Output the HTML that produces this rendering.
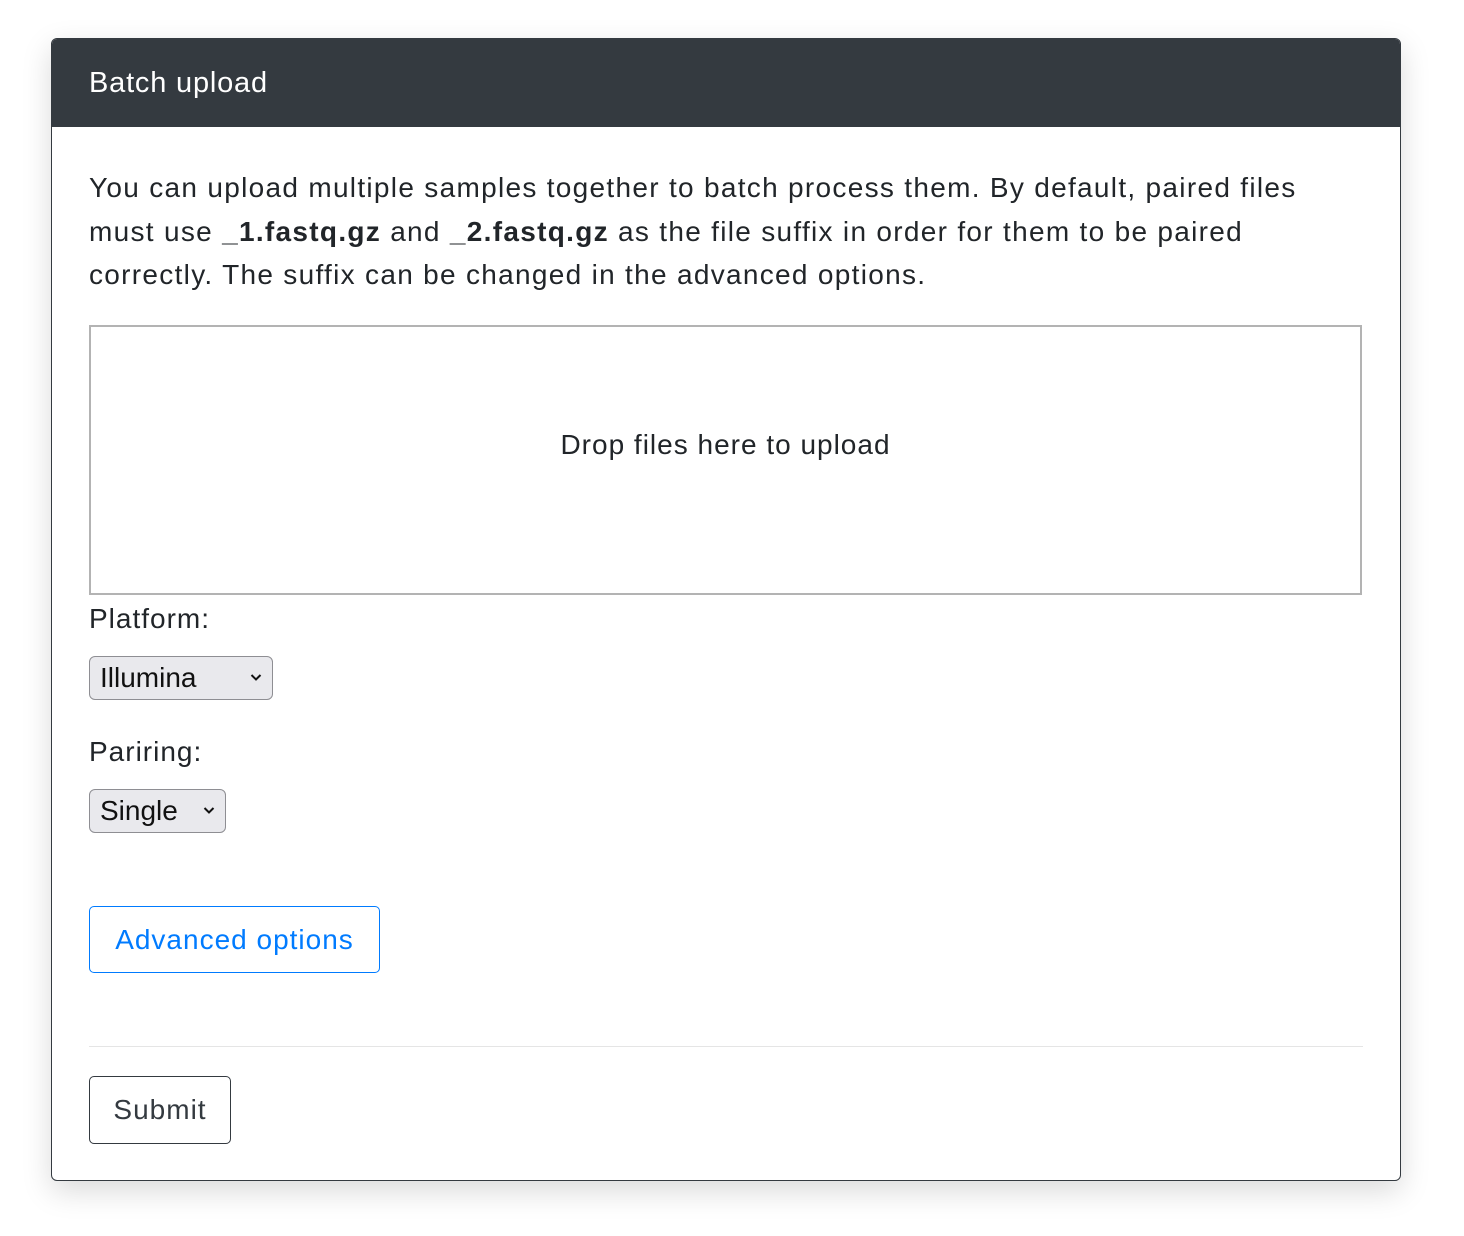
<!DOCTYPE html>
<html><head><style>
body{margin:0;background:#fff;font-family:"Liberation Sans",sans-serif;color:#212529;width:1464px;height:1236px;position:relative;overflow:hidden}
.card{position:absolute;left:51px;top:38px;width:1348px;height:1141px;border:1px solid #343a40;border-radius:6px;box-shadow:0 10px 30px rgba(0,0,0,.15);background:#fff;overflow:hidden}
.hdr{position:absolute;left:0;top:0;right:0;height:88px;background:#343a40;color:#fff;font-size:29px;letter-spacing:.8px;line-height:88px;padding-left:37px}
.a{position:absolute;white-space:nowrap}
p.a{margin:0;font-size:28px;letter-spacing:1.3px;line-height:43.5px;left:37px;top:127px}
.drop{position:absolute;left:37px;top:286px;width:1269px;height:266px;border:2px solid #b3b3b3;font-size:28px;letter-spacing:1px;text-align:center;line-height:236px}
.lbl{font-size:28px;letter-spacing:1px;left:37px}
.sel{position:absolute;left:37px;height:44px;border:1px solid #8e8e93;border-radius:6px;background:#e9e9ed;font-size:28px;line-height:42px;padding-left:10px;box-sizing:border-box;color:#111}
.sel svg{position:absolute;right:10px;top:16px}
.btn{position:absolute;left:37px;border-radius:5px;font-size:28px;letter-spacing:1px;text-align:center;box-sizing:border-box}
</style></head><body>
<div class="card">
<div class="hdr">Batch upload</div>
<p class="a">You can upload multiple samples together to batch process them. By default, paired files<br>must use <b>_1.fastq.gz</b> and <b>_2.fastq.gz</b> as the file suffix in order for them to be paired<br>correctly. The suffix can be changed in the advanced options.</p>
<div class="drop">Drop files here to upload</div>
<div class="a lbl" style="top:564px">Platform:</div>
<div class="sel" style="top:617px;width:184px">Illumina<svg width="12" height="9" viewBox="0 0 12 9"><path d="M1.5 2l4.5 4.5L10.5 2" fill="none" stroke="#111" stroke-width="2"/></svg></div>
<div class="a lbl" style="top:697px">Pariring:</div>
<div class="sel" style="top:750px;width:137px">Single<svg width="12" height="9" viewBox="0 0 12 9"><path d="M1.5 2l4.5 4.5L10.5 2" fill="none" stroke="#111" stroke-width="2"/></svg></div>
<div class="btn" style="top:867px;width:291px;height:67px;line-height:65px;border:1px solid #007bff;color:#007bff">Advanced options</div>
<div style="position:absolute;left:37px;top:1007px;width:1274px;height:1px;background:#e5e5e5"></div>
<div class="btn" style="top:1037px;width:142px;height:68px;line-height:66px;border:1px solid #343a40;color:#343a40">Submit</div>
</div>
</body></html>
